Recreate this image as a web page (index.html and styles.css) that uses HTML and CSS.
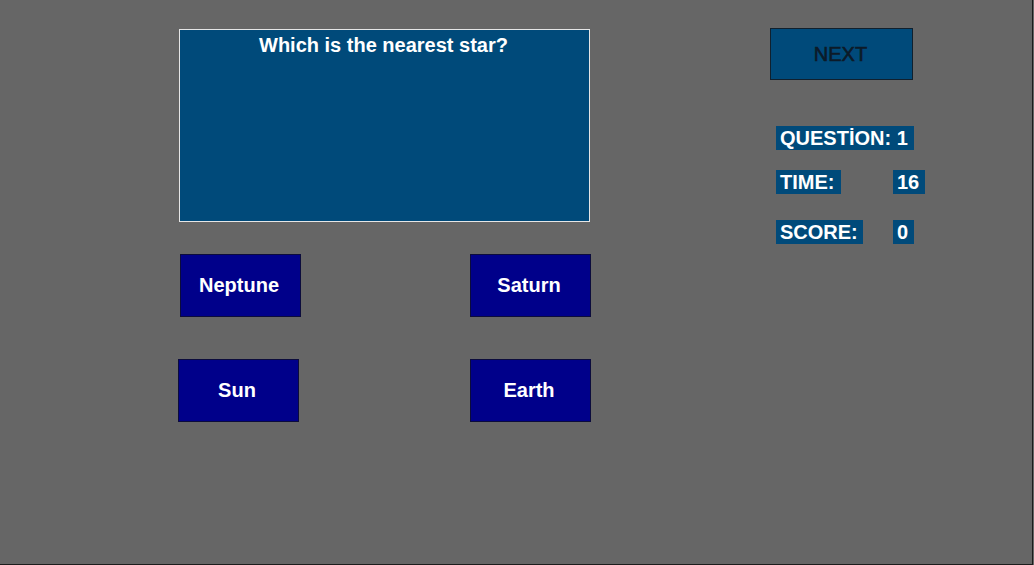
FILE: index.html
```html
<!DOCTYPE html>
<html>
<head>
<meta charset="utf-8">
<link rel="stylesheet" href="styles.css">
</head>
<body>
<div class="window">
  <div class="left">
    <div class="question-panel">
      <div class="question-text">Which is the nearest star?</div>
    </div>
    <div class="answers">
      <div class="answer shift">Neptune</div>
      <div class="answer">Saturn</div>
      <div class="answer">Sun</div>
      <div class="answer">Earth</div>
    </div>
  </div>
  <div class="right">
    <div class="next">NEXT</div>
    <div class="stats">
      <div class="stat-row first">
        <span class="tag w-question">QUESTİON: 1</span>
      </div>
      <div class="stat-row second">
        <span class="tag w-time">TIME:</span>
        <span class="tag w-16">16</span>
      </div>
      <div class="stat-row third">
        <span class="tag w-score">SCORE:</span>
        <span class="tag w-0">0</span>
      </div>
    </div>
  </div>
</div>
</body>
</html>
```

FILE: styles.css
```css
html, body {
  margin: 0;
  padding: 0;
  background: #666666;
  font-family: "Liberation Sans", Arial, sans-serif;
}

.window {
  box-sizing: border-box;
  width: 1033px;
  height: 565px;
  border-right: 1px solid #1c1c1c;
  border-bottom: 1px solid #1c1c1c;
  display: flex;
  padding: 28px 0 0 178px;
}

.left {
  width: 413px;
  display: flex;
  flex-direction: column;
}

.question-panel {
  box-sizing: border-box;
  margin: 1px 0 0 1px;
  width: 411px;
  height: 193px;
  background: #004a7a;
  border: 1px solid #e6e6e6;
}

.question-text {
  color: #ffffff;
  font-weight: bold;
  font-size: 20px;
  line-height: 23px;
  text-align: center;
  padding-top: 4px;
  padding-right: 2px;
}

.answers {
  margin-top: 32px;
  display: grid;
  grid-template-columns: 121px 121px;
  column-gap: 171px;
  row-gap: 42px;
}

.answer {
  box-sizing: border-box;
  width: 121px;
  height: 63px;
  background: #00008a;
  border: 1px solid #0c0c3c;
  color: #ffffff;
  font-weight: bold;
  font-size: 20px;
  display: flex;
  align-items: center;
  justify-content: center;
  padding-right: 3px;
}

.answer.shift {
  margin-left: 2px;
}

.right {
  margin-left: 179px;
  display: flex;
  flex-direction: column;
}

.next {
  box-sizing: border-box;
  width: 143px;
  height: 52px;
  background: #004a7a;
  border: 1px solid #10202e;
  color: #0c1a28;
  font-size: 20px;
  -webkit-text-stroke: 0.6px #0c1a28;
  display: flex;
  align-items: center;
  justify-content: center;
  padding-top: 1px;
  padding-right: 2px;
}

.stats {
  margin-left: 6px;
  display: flex;
  flex-direction: column;
}

.stat-row {
  display: grid;
  grid-template-columns: 117px auto;
  justify-items: start;
}

.stat-row.first { margin-top: 46px; }
.stat-row.second { margin-top: 20px; }
.stat-row.third { margin-top: 26px; }

.tag {
  box-sizing: border-box;
  height: 24px;
  line-height: 25px;
  background: #004a7a;
  color: #ffffff;
  font-weight: bold;
  font-size: 20px;
  padding-left: 4px;
  white-space: nowrap;
  overflow: hidden;
}

.w-question { width: 138px; grid-column: 1 / 3; }
.w-time { width: 65px; }
.w-16 { width: 32px; }
.w-score { width: 87px; }
.w-0 { width: 21px; }
```
